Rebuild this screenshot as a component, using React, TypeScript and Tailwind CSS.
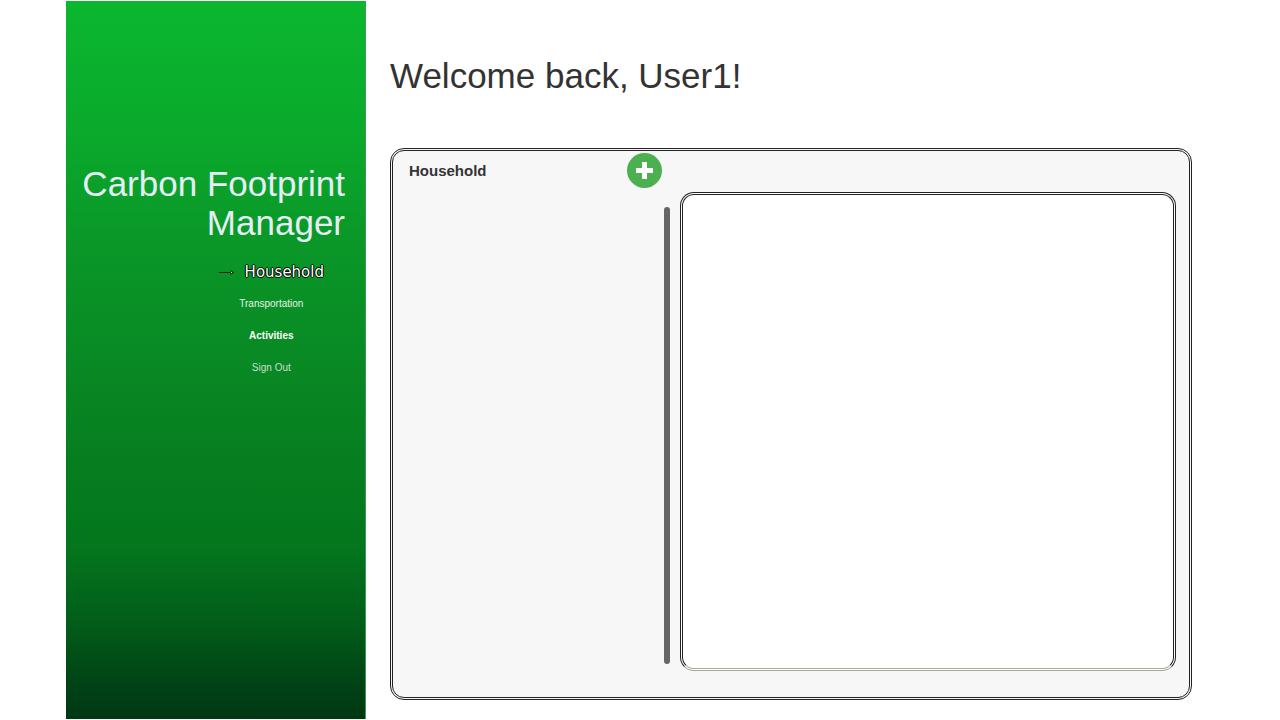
type NavItem = { label: string; href: string; className: string };

const navItems: NavItem[] = [
  { label: 'Transportation', href: '#transportation', className: 'text-[#e8f0e8]' },
  { label: 'Activities', href: '#activities', className: 'font-bold text-white' },
  { label: 'Sign Out', href: '#sign-out', className: 'text-[#c8dfcc]' },
];

function Arrow() {
  return (
    <svg width="16" height="7" viewBox="0 0 16 7" fill="none" aria-hidden="true">
      <path d="M0 3.5H14" stroke="#062b0c" />
      <path d="M11.5 1.5L14.5 3.5L11.5 5.5" stroke="#062b0c" />
      <path d="M12 3h1v1h-1z" fill="#cfe8d2" />
    </svg>
  );
}

function Sidebar() {
  return (
    <aside className="w-[300px] shrink-0 border-r border-[#3c9a50] bg-[linear-gradient(180deg,#0bb72f_0%,#0aaa2c_18%,#0a9728_34%,#088422_56%,#04761d_76%,#025c19_87%,#004316_95%,#003813_100%)] pt-[163px] pr-5 pl-3">
      <h1 className="text-right text-[35px] leading-[39px] text-[#e6ecf5]">Carbon Footprint Manager</h1>
      <nav className="mt-[14px] flex justify-end pr-[21px]">
        <ul className="flex flex-col items-center">
          <li className="flex h-8 items-center">
            <a
              href="#household"
              aria-current="page"
              className="flex items-center gap-[10px] font-['DejaVu_Sans',sans-serif] text-[15px] leading-8 text-white [text-shadow:1px_0_0_#000,-1px_0_0_#000,0_1px_0_#000,0_-1px_0_#000]"
            >
              <Arrow />
              Household
            </a>
          </li>
          {navItems.map((item) => (
            <li key={item.label} className="flex h-8 items-center text-[10px] leading-4">
              <a href={item.href} className={item.className}>
                {item.label}
              </a>
            </li>
          ))}
        </ul>
      </nav>
    </aside>
  );
}

function HouseholdPanel() {
  return (
    <section className="flex flex-1 rounded-[14px] border-[3px] border-double border-[#222] bg-[#f7f7f7] pr-[13px] pl-4">
      <header className="flex w-[253px] shrink-0 items-center justify-between self-start pt-[2px]">
        <h3 className="text-[15px] leading-5 font-bold text-[#333]">Household</h3>
        <button
          type="button"
          aria-label="Add household entry"
          className="flex size-[35px] items-center justify-center rounded-full bg-[#4caf50]"
        >
          <svg width="17" height="17" viewBox="0 0 17 17" fill="#fff" aria-hidden="true">
            <path d="M6 0h5v6h6v5h-6v6H6v-6H0V6h6z" />
          </svg>
        </button>
      </header>
      <div className="mt-14 mb-[33px] ml-[2px] w-[6px] shrink-0 rounded-full bg-[#666]" />
      <div className="mt-[41px] mb-[26px] ml-[10px] min-w-0 flex-1 rounded-[14px] border-[3px] border-double border-[#222] border-b-[#aaa69c] bg-white" />
    </section>
  );
}

export default function App() {
  return (
    <div className="flex min-h-screen bg-white px-[66px] py-px font-['Liberation_Sans',Arial,sans-serif]">
      <Sidebar />
      <main className="flex min-w-0 flex-1 flex-col pt-[55px] pr-[22px] pb-[19px] pl-6">
        <h2 className="text-[35px] leading-[39px] text-[#333]">Welcome back, User1!</h2>
        <div className="mt-[53px] flex flex-1">
          <HouseholdPanel />
        </div>
      </main>
    </div>
  );
}
